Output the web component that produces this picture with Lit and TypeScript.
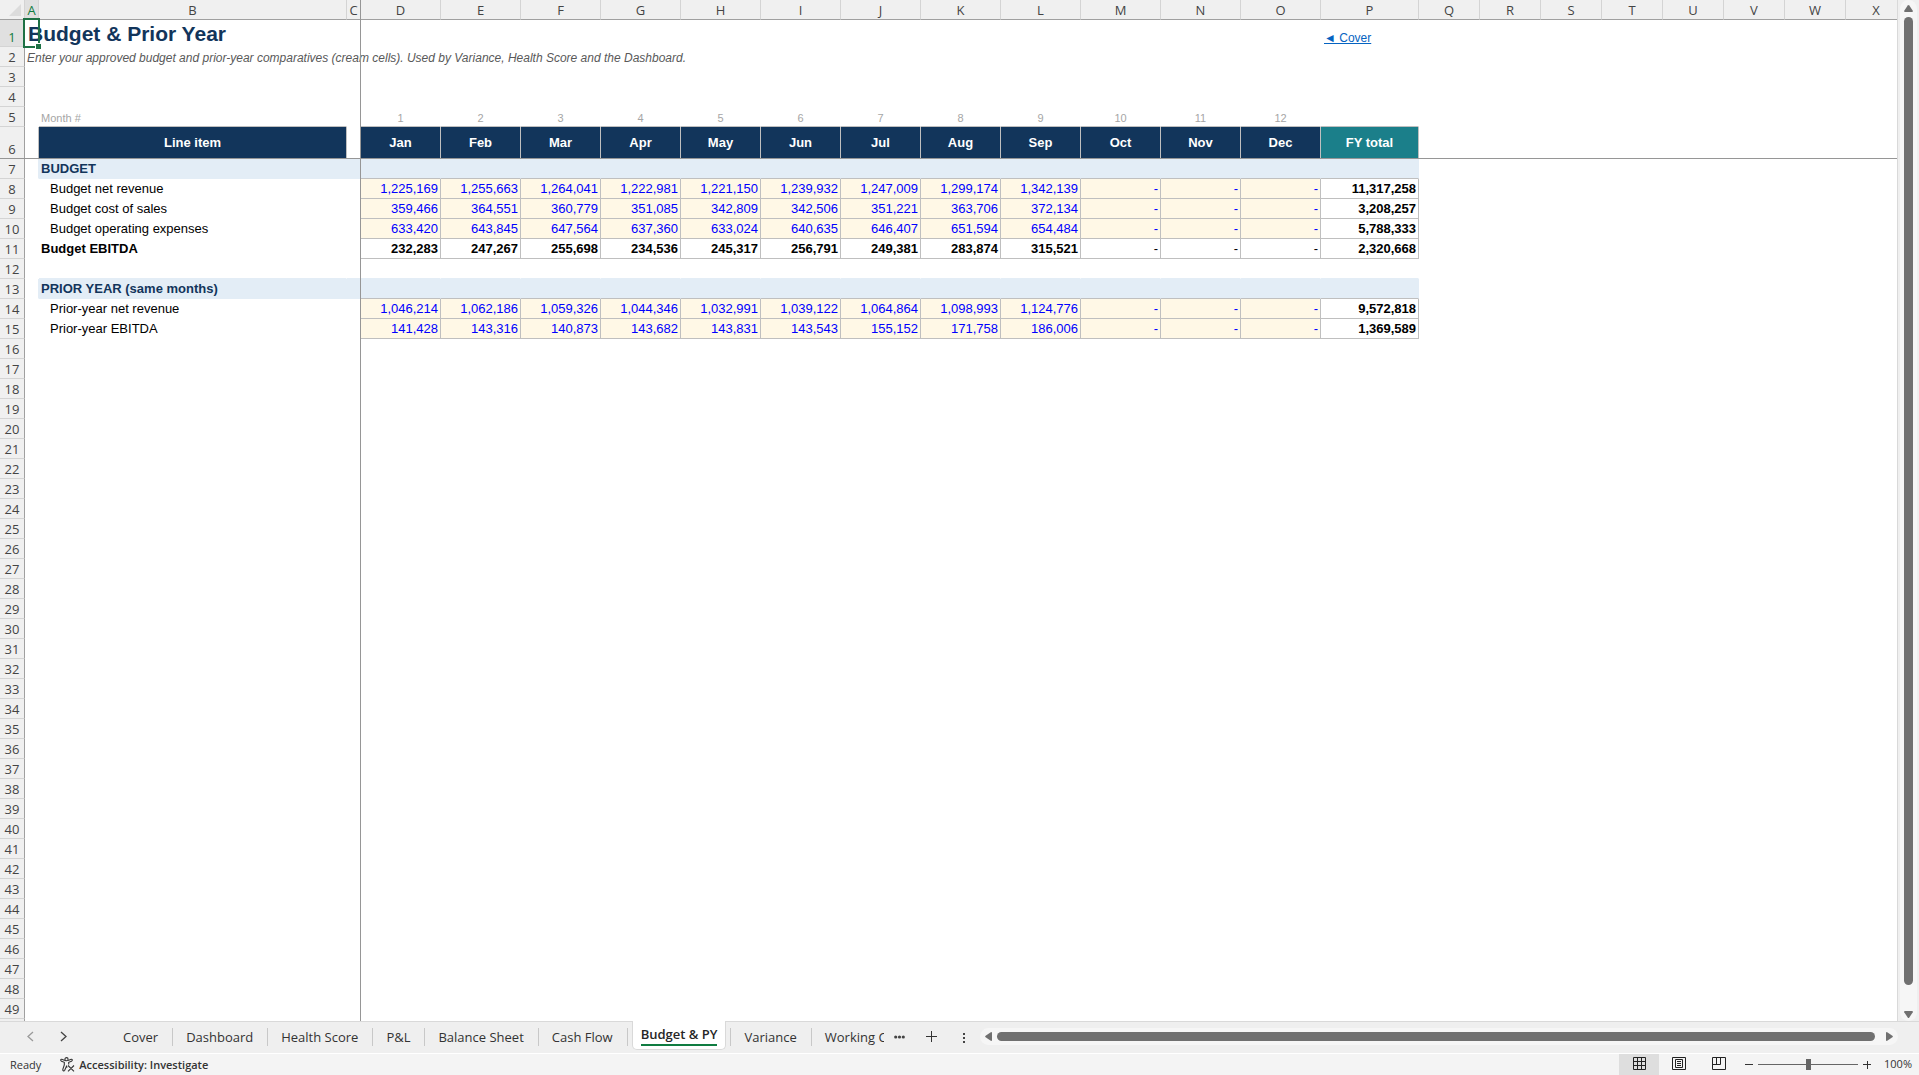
import { LitElement, html, css, nothing } from "lit";
import { customElement, state } from "lit/decorators.js";
import { classMap } from "lit/directives/class-map.js";

type Kind = "section" | "input" | "total";

interface Line {
  label: string;
  kind: Kind;
  values?: string[];
  total?: string;
}

const COLUMNS = "ABCDEFGHIJKLMNOPQRSTUVWX".split("");
const MONTHS = ["Jan", "Feb", "Mar", "Apr", "May", "Jun", "Jul", "Aug", "Sep", "Oct", "Nov", "Dec"];
const LAST_ROW = 49;
const TAIL = COLUMNS.slice(16);

const LINES: Record<number, Line> = {
  7: { label: "BUDGET", kind: "section" },
  8: {
    label: "Budget net revenue",
    kind: "input",
    values: ["1,225,169", "1,255,663", "1,264,041", "1,222,981", "1,221,150", "1,239,932", "1,247,009", "1,299,174", "1,342,139", "-", "-", "-"],
    total: "11,317,258",
  },
  9: {
    label: "Budget cost of sales",
    kind: "input",
    values: ["359,466", "364,551", "360,779", "351,085", "342,809", "342,506", "351,221", "363,706", "372,134", "-", "-", "-"],
    total: "3,208,257",
  },
  10: {
    label: "Budget operating expenses",
    kind: "input",
    values: ["633,420", "643,845", "647,564", "637,360", "633,024", "640,635", "646,407", "651,594", "654,484", "-", "-", "-"],
    total: "5,788,333",
  },
  11: {
    label: "Budget EBITDA",
    kind: "total",
    values: ["232,283", "247,267", "255,698", "234,536", "245,317", "256,791", "249,381", "283,874", "315,521", "-", "-", "-"],
    total: "2,320,668",
  },
  13: { label: "PRIOR YEAR (same months)", kind: "section" },
  14: {
    label: "Prior-year net revenue",
    kind: "input",
    values: ["1,046,214", "1,062,186", "1,059,326", "1,044,346", "1,032,991", "1,039,122", "1,064,864", "1,098,993", "1,124,776", "-", "-", "-"],
    total: "9,572,818",
  },
  15: {
    label: "Prior-year EBITDA",
    kind: "input",
    values: ["141,428", "143,316", "140,873", "143,682", "143,831", "143,543", "155,152", "171,758", "186,006", "-", "-", "-"],
    total: "1,369,589",
  },
};

@customElement("sheet-grid")
export class SheetGrid extends LitElement {
  static styles = css`
    :host {
      display: flex;
      flex-direction: column;
      position: relative;
      overflow: hidden;
      background: #fff;
      font: 13px/19px "Liberation Sans", Arial, sans-serif;
      color: #000;
    }
    table {
      flex: none;
      table-layout: fixed;
      width: 0;
      border-collapse: separate;
      border-spacing: 0;
    }
    .w-head { width: 25px; }
    .w-a { width: 14px; }
    .w-b { width: 308px; }
    .w-c { width: 14px; }
    .w-month { width: 80px; }
    .w-total { width: 98px; }
    .w-rest { width: 61px; }
    th, td {
      box-sizing: border-box;
      height: 20px;
      padding: 0;
      border: 0 solid transparent;
      border-right-width: 1px;
      border-bottom-width: 1px;
      font-weight: 400;
      text-align: left;
      vertical-align: bottom;
      white-space: nowrap;
    }
    .col, .num, .corner {
      font-family: "Open Sans", "Noto Sans", sans-serif;
      color: #444;
      text-align: center;
      background: #f0f0f0;
    }
    .col {
      padding-top: 1px;
      line-height: 18px;
      border-right-color: #d4d4d4;
      border-bottom-color: #a0a0a0;
    }
    .corner {
      border-right-color: #d4d4d4;
      border-bottom-color: #a0a0a0;
    }
    .corner svg { display: block; margin-left: 9px; }
    .num {
      line-height: 18px;
      border-right-color: #a0a0a0;
      border-bottom-color: #d4d4d4;
    }
    .picked {
      color: #107c41;
      background: #e0e0e0;
    }
    .r1 > * { height: 27px; }
    .r6 > * { height: 32px; }
    .title {
      max-width: 0;
      padding-left: 3px;
      font-size: 21px;
      line-height: 25px;
      font-weight: 700;
      color: #12355b;
    }
    .note {
      max-width: 0;
      padding-left: 2px;
      font-size: 12px;
      line-height: 16px;
      font-style: italic;
      color: #595959;
    }
    .link { padding-left: 3px; line-height: 16px; }
    a { color: #0563c1; font-size: 12px; }
    .month-no, .month-label {
      font-size: 11px;
      line-height: 16px;
      color: #a6a6a6;
    }
    .month-no { text-align: center; }
    .month-label { padding-left: 2px; }
    .above { border-bottom-color: #bfbfbf; }
    .before { border-right-color: #bfbfbf; }
    .head {
      background: #12355b;
      border-right-color: #bfbfbf;
      color: #fff;
      font-weight: 700;
      text-align: center;
      vertical-align: middle;
    }
    .head.fy { background: #1b7f8a; }
    .band { background: #e3edf6; }
    .band-before { border-right-color: #e3edf6; }
    .band-above { border-bottom-color: #e3edf6; }
    .band-text { font-weight: 700; color: #12355b; }
    .label { padding-left: 2px; }
    .indent { padding-left: 11px; }
    .strong { font-weight: 700; }
    .val {
      padding-right: 2px;
      text-align: right;
      border-right-color: #bfbfbf;
      border-bottom-color: #bfbfbf;
    }
    .entry { background: #fff8e6; color: #00f; }
    .rest { display: flex; flex: 1; }
    .rest-head { width: 24px; background: #f0f0f0; border-right: 1px solid #a0a0a0; }
    .freeze-v, .freeze-h {
      position: absolute;
      background: #969696;
    }
    .freeze-v { left: 360px; top: 0; bottom: 0; width: 1px; }
    .freeze-h { top: 158px; left: 0; right: 0; height: 1px; }
    .cursor {
      position: absolute;
      left: 23px;
      top: 18px;
      width: 13px;
      height: 26px;
      border: 2px solid #1e7145;
    }
    .handle {
      position: absolute;
      left: 35px;
      top: 43px;
      width: 6px;
      height: 6px;
      box-sizing: border-box;
      background: #1e7145;
      border: solid #fff;
      border-width: 1px 0 0 1px;
    }
  `;

  private blanks(n: number, cls = "") {
    return Array.from({ length: n }, () => html`<td class=${cls}></td>`);
  }

  private num(row: number) {
    return html`<th scope="row" class=${classMap({ num: true, picked: row === 1 })}>${row}</th>`;
  }

  private body(row: number) {
    const tail = this.blanks(TAIL.length);
    if (row === 1) {
      return html`<td class="title">Budget &amp; Prior Year</td>
        ${this.blanks(14)}<td class="link"><a href="#cover">◄ Cover</a></td>${tail}`;
    }
    if (row === 2) {
      return html`<td class="note">Enter your approved budget and prior-year comparatives (cream cells). Used by Variance, Health Score and the Dashboard.</td>
        ${this.blanks(15)}${tail}`;
    }
    if (row === 5) {
      return html`<td></td><td class="month-label above">Month #</td><td></td>
        ${MONTHS.map((_, i) => html`<td class="month-no above">${i + 1}</td>`)}<td class="above"></td>${tail}`;
    }
    if (row === 6) {
      return html`<td class="before"></td><th scope="col" class="head">Line item</th><td></td>
        ${MONTHS.map((m) => html`<th scope="col" class="head">${m}</th>`)}
        <th scope="col" class="head fy">FY total</th>${tail}`;
    }
    const line = LINES[row];
    if (!line) {
      const cls = LINES[row + 1]?.kind === "section" ? "band-above" : "";
      return html`<td></td>${this.blanks(15, cls)}${tail}`;
    }
    if (line.kind === "section") {
      return html`<td class="band-before"></td><td class="band band-text label">${line.label}</td><td class="band"></td>
        ${this.blanks(13, "band above")}${tail}`;
    }
    const total = line.kind === "total";
    return html`<td></td>
      <td class=${classMap({ label: total, strong: total, indent: !total })}>${line.label}</td>
      <td></td>
      ${line.values!.map((v) => html`<td class=${classMap({ val: true, entry: !total, strong: total && v !== "-" })}>${v}</td>`)}
      <td class="val strong">${line.total}</td>${tail}`;
  }

  render() {
    const rows = Array.from({ length: LAST_ROW }, (_, i) => i + 1);
    return html`
      <table>
        <colgroup>
          <col class="w-head" /><col class="w-a" /><col class="w-b" /><col class="w-c" />
          ${MONTHS.map(() => html`<col class="w-month" />`)}
          <col class="w-total" />
          ${TAIL.map(() => html`<col class="w-rest" />`)}
        </colgroup>
        <thead>
          <tr>
            <td class="corner">
              <svg width="12" height="19" viewBox="0 0 12 19"><path d="M12 4v12H0z" fill="#dcdcdc" /></svg>
            </td>
            ${COLUMNS.map((c) => html`<th scope="col" class=${classMap({ col: true, picked: c === "A" })}>${c}</th>`)}
          </tr>
        </thead>
        <tbody>
          ${rows.map((r) => html`<tr class=${r === 1 ? "r1" : r === 6 ? "r6" : nothing}>${this.num(r)}${this.body(r)}</tr>`)}
        </tbody>
      </table>
      <div class="rest"><div class="rest-head"></div></div>
      <div class="freeze-v"></div>
      <div class="freeze-h"></div>
      <div class="cursor"></div>
      <div class="handle"></div>
    `;
  }
}

@customElement("scroll-rail")
export class ScrollRail extends LitElement {
  static properties = { vertical: { type: Boolean, reflect: true } };
  declare vertical: boolean;

  static styles = css`
    :host {
      display: flex;
      align-items: center;
      gap: 5px;
      height: 17px;
      padding: 0 5px;
      border-radius: 9px;
      background: #f6f6f6;
    }
    :host([vertical]) {
      flex-direction: column;
      gap: 5px;
      width: 17px;
      height: auto;
      padding: 5px 0 3px;
    }
    button {
      display: flex;
      padding: 0;
      border: 0;
      background: none;
    }
    .bar {
      flex: 1;
      height: 9px;
      margin-right: 6px;
      border-radius: 5px;
      background: #707070;
    }
    :host([vertical]) .bar {
      width: 9px;
      margin: 0 0 21px;
    }
  `;

  render() {
    const v = this.vertical;
    return html`
      <button aria-label=${v ? "Scroll up" : "Scroll left"}>
        ${v
          ? html`<svg width="9" height="7"><path d="M3.700 .600Q4.500 -.400 5.300 .600L8.800 5.800Q9.200 7 8 7H1Q-.200 7 .200 5.800z" fill="#707070" /></svg>`
          : html`<svg width="7" height="9"><path d="M.600 3.700Q-.400 4.500 .600 5.300L5.800 8.800Q7 9.200 7 8V1Q7 -.200 5.800 .200z" fill="#707070" /></svg>`}
      </button>
      <div class="bar"></div>
      <button aria-label=${v ? "Scroll down" : "Scroll right"}>
        ${v
          ? html`<svg width="9" height="7"><path d="M3.700 6.400Q4.500 7.400 5.300 6.400L8.800 1.200Q9.200 0 8 0H1Q-.200 0 .200 1.200z" fill="#707070" /></svg>`
          : html`<svg width="7" height="9"><path d="M6.400 3.700Q7.400 4.500 6.400 5.300L1.200 8.800Q0 9.200 0 8V1Q0 -.200 1.200 .200z" fill="#707070" /></svg>`}
      </button>
    `;
  }
}

const TABS = ["Cover", "Dashboard", "Health Score", "P&L", "Balance Sheet", "Cash Flow", "Budget & PY", "Variance", "Working C"];

@customElement("sheet-tabs")
export class SheetTabs extends LitElement {
  @state() private active = "Budget & PY";

  static styles = css`
    :host {
      display: flex;
      align-items: flex-start;
      height: 32px;
      background: #efefef;
      box-shadow: inset 0 1px #d9d9d9;
      font: 13px/18px "Open Sans", "Noto Sans", sans-serif;
      color: #333;
    }
    button {
      margin: 0;
      padding: 0;
      border: 0;
      background: none;
      font: inherit;
      color: inherit;
      white-space: nowrap;
    }
    .nav { display: flex; gap: 26px; padding: 10px 0 0 27px; width: 83px; }
    .nav button { display: flex; }
    .tabs { display: flex; align-items: flex-start; width: 774px; overflow: hidden; }
    .tab {
      height: 18px;
      margin-top: 7px;
      padding: 0 14px 0 13px;
      border-right: 1px solid #c8c8c8;
    }
    .tab:last-child { border: 0; padding-right: 0; }
    .active {
      height: 29px;
      margin: 0 4px;
      padding: 4px 8px 3px;
      border: 1px solid #d9d9d9;
      border-top: 0;
      border-radius: 0 0 5px 5px;
      background: #fff;
      font-weight: 600;
      color: #262626;
      display: flex;
    }
    .active span { border-bottom: 2px solid #107c41; height: 19px; }
    .after { border-left: 1px solid #c8c8c8; }
    .tools { display: flex; align-items: center; height: 31px; }
    .tools button { display: flex; }
    .more { margin-left: 10px; }
    .add { margin-left: 21px; }
    .grip { margin: 3px 15px 0 26px; }
    scroll-rail { flex: 1; margin: 7px 21px 0 0; }
  `;

  render() {
    const at = TABS.indexOf(this.active);
    return html`
      <div class="nav">
        <button aria-label="Previous sheet">
          <svg width="7" height="11"><path d="M6 1L1 5.500L6 10" fill="none" stroke="#9a9a9a" stroke-width="1.300" /></svg>
        </button>
        <button aria-label="Next sheet">
          <svg width="7" height="11"><path d="M1 1L6 5.500L1 10" fill="none" stroke="#444" stroke-width="1.300" /></svg>
        </button>
      </div>
      <div class="tabs" role="tablist">
        ${TABS.map((t, i) => html`
          <button role="tab" aria-selected=${i === at ? "true" : "false"}
            class=${classMap({ tab: i !== at, active: i === at, after: i === at + 1 })}
            @click=${() => (this.active = t)}><span>${t}</span></button>`)}
      </div>
      <div class="tools">
        <button class="more" aria-label="More sheets">
          <svg width="11" height="4"><g fill="#444"><circle cx="1.700" cy="2" r="1.600" /><circle cx="5.500" cy="2" r="1.600" /><circle cx="9.300" cy="2" r="1.600" /></g></svg>
        </button>
        <button class="add" aria-label="New sheet">
          <svg width="11" height="11"><path d="M5.500 0V11M0 5.500H11" stroke="#333" /></svg>
        </button>
        <svg class="grip" width="2" height="10"><path d="M0 0H2V2H0zM0 4H2V6H0zM0 8H2V10H0z" fill="#444" /></svg>
      </div>
      <scroll-rail></scroll-rail>
    `;
  }
}

@customElement("status-bar")
export class StatusBar extends LitElement {
  static styles = css`
    :host {
      display: flex;
      align-items: stretch;
      height: 21px;
      border-top: 1px solid #fff;
      background: #f4f4f4;
      font: 11px/21px "Open Sans", "Noto Sans", sans-serif;
      color: #333;
    }
    button {
      display: flex;
      align-items: center;
      margin: 0;
      padding: 0;
      border: 0;
      background: none;
      font: inherit;
      color: inherit;
    }
    .ready { padding: 0 19px 0 10px; }
    .check { gap: 4px; padding-bottom: 1px; font-weight: 600; line-height: 19px; }
    .views { display: flex; margin-left: auto; }
    .view { width: 40px; justify-content: center; padding-bottom: 2px; }
    .on { background: #dedede; }
    .zoom { display: flex; align-items: center; gap: 5px; padding: 0 0 1px 6px; }
    input {
      appearance: none;
      width: 100px;
      height: 11px;
      margin: 0;
      background: linear-gradient(#666, #666) center / 100% 1px no-repeat;
    }
    input::-webkit-slider-thumb {
      appearance: none;
      width: 5px;
      height: 11px;
      background: #666;
    }
    .percent { padding: 0 7px 0 12px; line-height: 19px; }
  `;

  render() {
    return html`
      <span class="ready">Ready</span>
      <button class="check">
        <svg width="15" height="15" viewBox="0 0 15 15" fill="none" stroke="#333" stroke-width="1.100">
          <circle cx="6.500" cy="2.200" r="1.600" />
          <path d="M4.900 3.400L1.800 2.300Q.700 2.200.700 3.200Q.800 3.900 1.500 4.200L4.300 5.300V8L2.800 12.300Q2.600 13.600 3.500 13.900Q4.300 14 4.700 13.200L6.500 9.300L7.200 10.500M8.100 3.400L11.200 2.300Q12.300 2.200 12.300 3.200Q12.200 3.900 11.500 4.200L8.700 5.300V7.500M8 8.500L14 14.300M14 8.500L8 14.300" />
        </svg>
        Accessibility: Investigate
      </button>
      <div class="views">
        <button class="view on" aria-label="Normal view">
          <svg width="13" height="13" fill="none" stroke="#222"><path d="M.500.500H12.500V12.500H.500zM4.500.500V12.500M8.500.500V12.500M.500 4.500H12.500M.500 8.500H12.500" /></svg>
        </button>
        <button class="view" aria-label="Page layout">
          <svg width="14" height="13" fill="none" stroke="#222"><path d="M.500.500H13.500V12.500H.500zM3.500 2.500H10.500V10.500H3.500zM5 4.500H9M5 6.500H9M5 8.500H9" /></svg>
        </button>
        <button class="view" aria-label="Page break preview">
          <svg width="14" height="13" fill="none" stroke="#222"><path d="M.500.500H13.500V12.500H.500zM4.500.500V7.500M8.500.500V7.500M.500 7.500H8.500" /></svg>
        </button>
      </div>
      <div class="zoom">
        <button aria-label="Zoom out"><svg width="8" height="9"><path d="M0 4.500H8" stroke="#333" /></svg></button>
        <input type="range" min="0" max="100" value="50" aria-label="Zoom" />
        <button aria-label="Zoom in"><svg width="9" height="9"><path d="M0 4.500H8M4.500 1V9" stroke="#333" /></svg></button>
      </div>
      <span class="percent">100%</span>
    `;
  }
}

@customElement("app-root")
export class AppRoot extends LitElement {
  static styles = css`
    :host {
      display: flex;
      flex-direction: column;
      height: 100vh;
      overflow: hidden;
      background: #efefef;
    }
    .work { display: flex; flex: 1; min-height: 0; }
    sheet-grid { flex: 1; min-width: 0; border-right: 1px solid #d9d9d9; }
    scroll-rail { margin: 0 2px; }
    sheet-tabs, status-bar { flex: none; }
  `;

  render() {
    return html`
      <div class="work">
        <sheet-grid></sheet-grid>
        <scroll-rail vertical></scroll-rail>
      </div>
      <sheet-tabs></sheet-tabs>
      <status-bar></status-bar>
    `;
  }
}
